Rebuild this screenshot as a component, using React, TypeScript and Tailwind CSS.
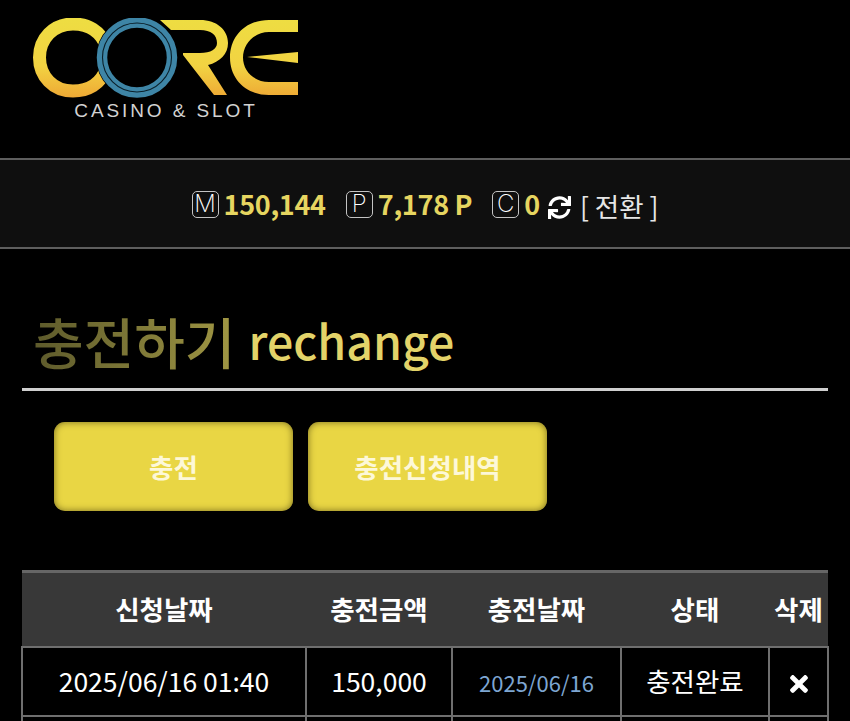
import { FaSync, FaTimes } from "react-icons/fa";

const cjk = "font-['Noto_Sans_CJK_KR','Noto_Sans',sans-serif]";

const Logo = () => (
	<svg width="270" height="82" viewBox="0 0 270 82" className="block">
		<defs>
			<linearGradient id="goldR" gradientUnits="userSpaceOnUse" x1="0" y1="2" x2="0" y2="79">
				<stop offset="0" stopColor="#eedd42" />
				<stop offset="0.6" stopColor="#f2d342" />
				<stop offset="1" stopColor="#eea935" />
			</linearGradient>
		</defs>
		{/* C */}
		<path d="M74 30 C68 12 54 6 40 6 C20 6 6.5 21 6.5 39.5 C6.5 58 20 73 40 73 C54 73 68 67 74 49" fill="none" stroke="url(#goldR)" strokeWidth="13" />
		{/* R */}
		<path
			d="M127 2 H167 C184 2 195 12 195 25 C195 36 187 44 175 47 L194 77 H181 L150 37 V35 H167 C178 35 184 31 184 25 C184 17 178 12 167 12 H138 Z"
			fill="url(#goldR)"
		/>
		{/* E */}
		<path
			d="M265 2 H236 C213 2 197 18 197 39.5 C197 61 213 77 236 77 H265 V64 H236 C221 64 210 53 210 39.5 C210 26 221 14 236 14 H265 Z"
			fill="url(#goldR)"
		/>
		<path d="M214 39 L265 34 V45 Z" fill="url(#goldR)" />
		{/* O ring */}
		<circle cx="104" cy="39.5" r="41" fill="#000" />
		<circle cx="104" cy="39.5" r="35" fill="none" stroke="#3e85a6" strokeWidth="10.5" />
		<circle cx="104" cy="39.5" r="34.5" fill="none" stroke="#0a1f29" strokeWidth="1.1" />
	</svg>
);

const Badge = ({ letter }: { letter: string }) => (
	<span className="flex h-[27px] w-[27px] items-center justify-center rounded-[5px] border-[1.5px] border-[#c4c4c4] font-['Inter',sans-serif] text-[24px] leading-none font-extralight text-white">
		{letter}
	</span>
);

const Stat = ({ letter, value, className }: { letter: string; value: string; className?: string }) => (
	<div className={`flex items-center gap-[5px] ${className ?? ""}`}>
		<Badge letter={letter} />
		<span className="-mt-[2px] text-[27px] leading-none font-bold tracking-[-0.3px] text-[#e6d560]">{value}</span>
	</div>
);

const headers = ["신청날짜", "충전금액", "충전날짜", "상태", "삭제"];
const cell = "border-[2px] border-[#6f6f6f] p-0";

export default function App() {
	return (
		<div className={`h-[721px] w-[850px] overflow-hidden bg-black ${cjk}`}>
			<header className="flex h-[158px] flex-col pl-[33px] pt-[18px]">
				<Logo />
				<div className="-mt-[1px] w-[266px] text-center font-['Liberation_Sans',sans-serif] text-[19px] leading-[24px] tracking-[2.9px] text-[#d2d2d2]">
					CASINO &amp; SLOT
				</div>
			</header>

			<div className="flex h-[91px] items-center justify-center border-y-2 border-[#5e5e5e] bg-[#0f0f0f] pt-[1px]">
				<Stat letter="M" value="150,144" />
				<Stat letter="P" value="7,178 P" className="ml-[20px]" />
				<Stat letter="C" value="0" className="ml-[20px]" />
				<FaSync className="ml-[8px] mt-[7px] h-[23px] w-[23px] text-white" />
				<span className="ml-[9px] mt-[5px] text-[26.5px] leading-none text-[#e6e6e6]">[ 전환 ]</span>
			</div>

			<div className="mx-[22px]">
				<h1 className="flex h-[142px] items-end border-b-[3px] border-[#cfcfcf] pb-[13px] pl-[11px]">
					<span className="bg-gradient-to-r from-[#5d5a2b] via-[#a49a45] to-[#e8d868] bg-[length:420px_100%] bg-clip-text pr-[13px] text-[55px] leading-[70px] font-medium text-transparent">
						충전하기
					</span>
					<span className="text-[46.5px] leading-[70px] font-medium text-[#e3d369]">rechange</span>
				</h1>

				<div className="mt-[31px] flex gap-[15px] pl-[32px]">
					<button className="flex h-[89px] w-[239px] items-center justify-center rounded-[11px] bg-[#e9d644] text-[26.5px] font-bold text-[#fdf8d8] shadow-[inset_0_0_7px_rgba(90,80,20,0.8)]">
						충전
					</button>
					<button className="flex h-[89px] w-[239px] items-center justify-center rounded-[11px] bg-[#e9d644] text-[26.5px] font-bold text-[#fdf8d8] shadow-[inset_0_0_7px_rgba(90,80,20,0.8)]">
						충전신청내역
					</button>
				</div>

				<table className="-ml-[1px] mt-[59px] w-[806px] table-fixed border-collapse text-center text-white">
					<colgroup>
						<col className="w-[284px]" />
						<col className="w-[146px]" />
						<col className="w-[169px]" />
						<col className="w-[148px]" />
						<col className="w-[59px]" />
					</colgroup>
					<thead>
						<tr className="h-[75px] border-t-[3px] border-[#666] bg-[#383838]">
							{headers.map((h) => (
								<th key={h} className="p-0 text-[26.5px] leading-none font-bold whitespace-nowrap">
									{h}
								</th>
							))}
						</tr>
					</thead>
					<tbody>
						<tr className="h-[69px]">
							<td className={`${cell} text-[26.5px]`}>2025/06/16 01:40</td>
							<td className={`${cell} text-[26.5px]`}>150,000</td>
							<td className={`${cell} pt-[2px] text-[22px] text-[#7ea6d2]`}>2025/06/16</td>
							<td className={`${cell} text-[26.5px]`}>충전완료</td>
							<td className={cell}>
								<FaTimes className="mx-auto mt-[6px] h-[26px] w-[24px]" />
							</td>
						</tr>
						<tr className="h-[69px]">
							<td className={cell} />
							<td className={cell} />
							<td className={cell} />
							<td className={cell} />
							<td className={cell} />
						</tr>
					</tbody>
				</table>
			</div>
		</div>
	);
}
